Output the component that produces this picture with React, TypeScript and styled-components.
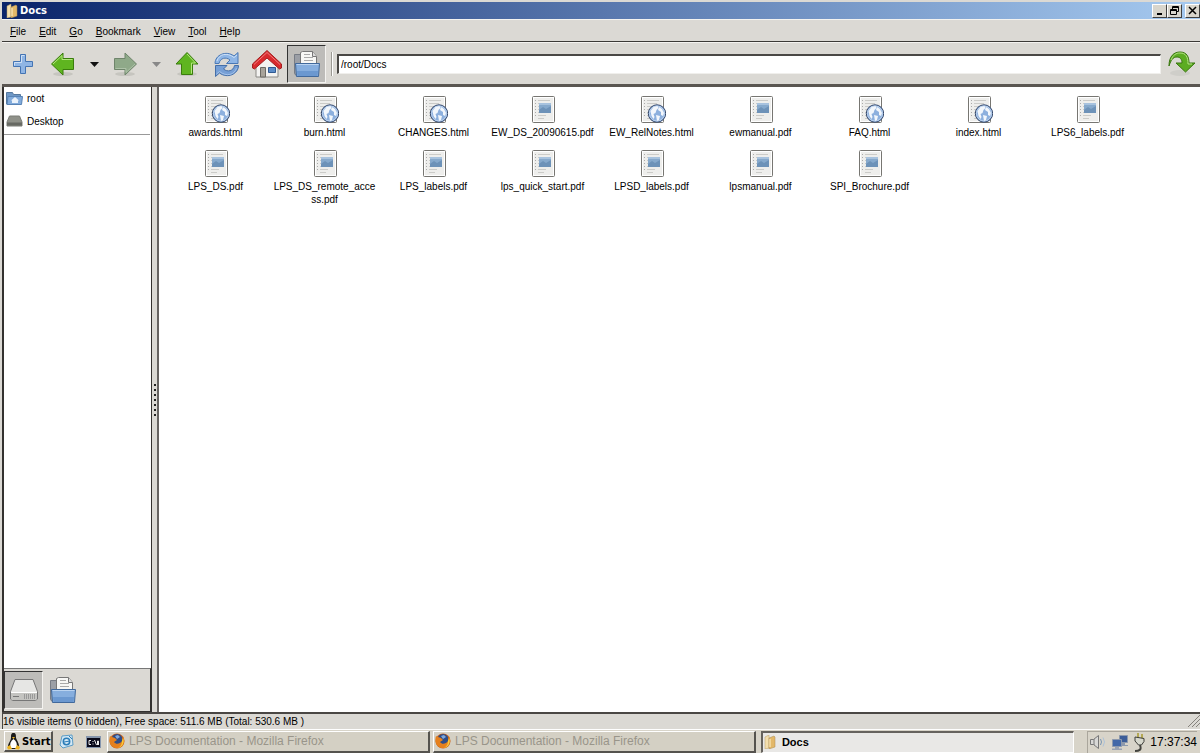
import React from 'react';
import styled, { createGlobalStyle, css } from 'styled-components';

const Global = createGlobalStyle`
  * { box-sizing: border-box; }
  html, body, #root { height: 100%; }
  body {
    margin: 0;
    background: #d9d7cf;
    color: #000;
    font: 10px/13px "Liberation Sans", Arial, sans-serif;
    overflow: hidden;
  }
  button, input { font: inherit; color: inherit; margin: 0; }
  svg { display: block; flex: none; }
  h1, ul { margin: 0; padding: 0; list-style: none; }
`;

const Desktop = styled.div`
  height: 100vh;
  display: flex;
  flex-direction: column;
`;

const Window = styled.section`
  flex: 1;
  min-height: 0;
  display: flex;
  flex-direction: column;
  padding: 2px 0 0 2px;
  background: #dbd9d4;
`;

const TitleBar = styled.header`
  flex: none;
  height: 17px;
  display: flex;
  align-items: center;
  gap: 2px;
  padding-left: 4px;
  background: linear-gradient(90deg, #0a246a, #a6caf0);
`;

const Title = styled.h1`
  flex: 1;
  color: #fff;
  font: bold 10px/17px "DejaVu Sans", Verdana, sans-serif;
`;

const WindowButton = styled.button<{ $apart?: boolean }>`
  width: 15px;
  height: 14px;
  padding: 0;
  margin-left: ${p => (p.$apart ? 1 : -2)}px;
  display: grid;
  place-items: center;
  background: #d8d5cc;
  border: 1px solid;
  border-color: #fff #404040 #404040 #fff;
`;

const MenuBar = styled.nav`
  flex: none;
  height: 23px;
  display: flex;
  align-items: center;
  gap: 13px;
  padding: 2px 0 0 8px;
  border-top: 1px solid #f4f3f0;
  border-bottom: 1px solid #3c3a37;
`;

const MenuButton = styled.button`
  padding: 0;
  border: 0;
  background: none;
  u { text-underline-offset: 1px; }
`;

const ToolBar = styled.div`
  flex: none;
  height: 45px;
  display: flex;
  align-items: center;
  padding: 1px 4px 0 1px;
  border-top: 1px solid #f4f3f0;
  border-bottom: 3px solid #5a5651;
`;

const ToolButton = styled.button<{ $narrow?: boolean }>`
  width: ${p => (p.$narrow ? 22 : 40)}px;
  height: 38px;
  padding: 0;
  display: grid;
  place-items: center;
  border: 0;
  background: none;
`;

const sunken = css`
  background: #bdbcb9;
  border: 1px solid;
  border-color: #333 #f4f3f0 #f4f3f0 #333;
`;

const PanelButton = styled.button<{ $pressed?: boolean }>`
  width: 39px;
  height: 38px;
  padding: 0;
  display: grid;
  place-items: center;
  border: 0;
  background: none;
  ${p => p.$pressed && sunken}
`;

const Separator = styled.span`
  width: 2px;
  height: 24px;
  margin: 0 4px 0 5px;
  border-left: 1px solid #9a9892;
  border-right: 1px solid #fff;
`;

const PathInput = styled.input`
  flex: 1;
  min-width: 0;
  height: 20px;
  padding: 0 2px;
  margin-right: 7px;
  background: #fff;
  border: solid;
  border-width: 2px 1px 1px 2px;
  border-color: #4a4845 #f0efec #f0efec #4a4845;
  outline: 0;
`;

const GoButton = styled.button`
  padding: 0;
  border: 0;
  background: none;
`;

const Body = styled.div`
  flex: 1;
  min-height: 0;
  display: flex;
`;

const Sidebar = styled.aside`
  width: 150px;
  display: flex;
  flex-direction: column;
  border: solid #33312f;
  border-width: 0 1px 1px 2px;
  background: #fff;
`;

const Places = styled.ul`
  flex: 1;
  padding-right: 1px;
`;

const Place = styled.li`
  height: 23px;
  display: flex;
  align-items: center;
  gap: 4px;
  padding-left: 2px;
  &:last-child { height: 25px; padding-bottom: 2px; border-bottom: 1px solid #999; }
`;

const PanelSwitch = styled.div`
  height: 43px;
  display: flex;
  align-items: center;
  background: #dbd9d4;
  border-top: 1px solid #777;
  border-right: 1px solid #33312f;
`;

const Splitter = styled.div`
  width: 7px;
  display: flex;
  flex-direction: column;
  align-items: center;
  justify-content: center;
  gap: 3px;
  background: #dbd9d4;
  border-right: 2px solid #666361;
`;

const Grip = styled.span`
  width: 2px;
  height: 2px;
  background: #222;
`;

const Files = styled.main`
  flex: 1;
  min-width: 0;
  display: grid;
  grid-template-columns: repeat(auto-fill, 109px);
  align-content: start;
  row-gap: 10px;
  padding: 8px 0 0 2px;
  background: #fff;
`;

const FileItem = styled.div`
  display: flex;
  flex-direction: column;
  align-items: center;
  gap: 3px;
`;

const FileName = styled.span`
  width: 104px;
  text-align: center;
  word-break: break-all;
`;

const StatusBar = styled.footer`
  flex: none;
  height: 17px;
  display: flex;
  align-items: center;
  justify-content: space-between;
  padding-bottom: 1px;
  border-top: 2px solid #4a4744;
  border-left: 1px solid #4a4744;
`;

const TaskBar = styled.footer`
  flex: none;
  height: 24px;
  display: flex;
  align-items: center;
  padding: 0 3px 0 4px;
  background: #d8d4c9;
  border-top: 1px solid #fff;
`;

const StartButton = styled.button`
  width: 49px;
  height: 21px;
  padding: 0 0 0 1px;
  display: flex;
  align-items: center;
  gap: 1px;
  font: bold 10px/13px "DejaVu Sans", Verdana, sans-serif;
  background: #d8d4c9;
  border: solid;
  border-width: 1px 2px 2px 1px;
  border-color: #fff #55534e #55534e #fff;
`;

const QuickButton = styled.button`
  width: 27px;
  padding: 0;
  display: grid;
  place-items: center;
  border: 0;
  background: none;
`;

const Task = styled.button<{ $active?: boolean }>`
  flex: ${p => (p.$active ? 97 : 100)} 1 0;
  min-width: 0;
  height: 22px;
  display: flex;
  align-items: center;
  gap: 4px;
  padding: 0 0 0 1px;
  margin-right: 3px;
  font-size: 12px;
  line-height: 16px;
  color: #99958a;
  background: #d4d0c4;
  border: solid;
  border-width: 1px 2px 2px 1px;
  border-color: #fff #55534e #55534e #fff;
  ${p => p.$active && css`
    gap: 6px;
    margin: 0 13px 0 2px;
    font-size: 11px;
    font-weight: bold;
    color: #000;
    background: #e9e8e6;
    border-width: 2px 1px 1px 2px;
    border-color: #66635e #fff #fff #66635e;
  `}
`;

const Tray = styled.div`
  height: 22px;
  display: flex;
  align-items: center;
  gap: 4px;
  padding-left: 1px;
  font-size: 12px;
  line-height: 16px;
  border-left: 1px solid #aaa69c;
  border-top: 1px solid #aaa69c;
`;

const FolderTabs = () => (
  <svg width="12" height="14" viewBox="0 0 12 14">
    <path d="M1 2l4-2v13l-4 1z" fill="#f4dfae" stroke="#b79a63" strokeWidth=".5" />
    <path d="M5 3l5-2 1 1v10l-6 2z" fill="#e3b869" stroke="#a98a50" strokeWidth=".5" />
    <path d="M6 4v8" stroke="#fff3cf" />
  </svg>
);

const Plus = () => (
  <svg width="22" height="22" viewBox="0 0 22 22">
    <path d="M8.500 1.500h5v7h7v5h-7v7h-5v-7h-7v-5h7z" fill="#8fb5e4" stroke="#4474b3" />
    <path d="M9.500 9.500v-7h3M9.500 9.500h-7v3" fill="none" stroke="#cfe0f5" />
  </svg>
);

const Arrow = ({ turn = 0, grey = false }: { turn?: number; grey?: boolean }) => (
  <svg width="26" height="26" viewBox="0 0 26 26">
    <ellipse cx="13" cy="23" rx="10" ry="2" fill="#c6c5bf" />
    <g transform={`rotate(${turn} 13 13)`}>
      <path d="M1.500 13L13 2v5.500h10.500v11H13V24z" fill={grey ? '#8fa989' : '#5fb520'} stroke={grey ? '#6f856b' : '#3a7d0c'} />
      <path d="M3 13l9-8.500v4h10.500" fill="none" stroke={grey ? '#aec2a8' : '#b5e67f'} />
    </g>
  </svg>
);

const Caret = ({ color }: { color: string }) => (
  <svg width="9" height="5" viewBox="0 0 9 5"><path d="M0 0h9L4.500 5z" fill={color} /></svg>
);

const refreshBlade = 'M1 12.500C1 4 12 -1 20 5l4-3.500v11H12.500L16 9C12 5.500 6 7 5 12.500z';

const Refresh = () => (
  <svg width="26" height="27" viewBox="0 0 26 27">
    <path d={refreshBlade} fill="#8fb6e6" stroke="#4a78b5" />
    <path d="M3 10C5 3 13 1 20 6.500l3-2.500" fill="none" stroke="#cfe1f6" />
    <g transform="rotate(180 12.750 13.500)">
      <path d={refreshBlade} fill="#769fd6" stroke="#456fa8" />
      <path d="M3 10C5 3 13 1 20 6.500l3-2.500" fill="none" stroke="#a5c3e9" />
    </g>
  </svg>
);

const House = () => (
  <svg width="30" height="28" viewBox="0 0 30 28">
    <path d="M4 14L15 5l11 9v13H4z" fill="#f4f3f1" stroke="#8b8985" />
    <path d="M8.500 17.500h5V27h-5z" fill="#a8a39a" stroke="#6d6a64" />
    <path d="M16.500 17.500h7v5h-7z" fill="#5b8cc8" stroke="#315a92" />
    <path d="M15 .5L29.500 14v4l-2 1L15 8 2.500 19l-2-1v-4z" fill="#d92a2e" stroke="#a32020" />
    <path d="M2 14.500L15 2.500l13 12" fill="none" stroke="#f27a7a" />
  </svg>
);

const DocsFolder = () => (
  <svg width="28" height="28" viewBox="0 0 28 28">
    <path d="M1.500 4.500h7V25h-6l-1-2z" fill="#9b9fa6" stroke="#777c85" />
    <path d="M7.500 17V2.500l2-1h10l4 5V17z" fill="#f7f7f5" stroke="#777" />
    <path d="M11 4.500h6M11 7.500h9M11 10.500h9" stroke="#aaa" />
    <path d="M19.500 1.500v5h4" fill="#ddd" stroke="#777" />
    <path d="M3.500 26.500l-1-13h24l-1 13z" fill="#86aede" stroke="#41699c" />
    <path d="M3.500 14.500h22" stroke="#bad3f0" />
    <path d="M4 21h21l-.5 5h-20z" fill="#6b98d0" />
  </svg>
);

const GoArrow = () => (
  <svg width="28" height="28" viewBox="0 0 28 28">
    <ellipse cx="12" cy="23" rx="10" ry="3" fill="#cfcec9" />
    <path d="M1 16C1 6 6 2 12 2c7 0 9 5 9 11h6l-9.500 9L8 13h6c0-4-2-6-5-6-4 0-6 3-8 9z" fill="#5cac22" stroke="#39760f" />
    <path d="M3 10c2-5 5-7 9-7 6 0 8 4 8 11h4" fill="none" stroke="#b3e084" />
  </svg>
);

const HomeFolder = () => (
  <svg width="17" height="15" viewBox="0 0 17 15">
    <path d="M.5 1.500h6l1 2h7V13H.5z" fill="#6f98c6" stroke="#56799f" />
    <path d="M1 13.500L2 5.500h14.500l-1 8z" fill="#82abdb" stroke="#5883b5" />
    <path d="M9 6l4 3.500h-1V12H6V9.500H5z" fill="#eaf2fb" />
  </svg>
);

const DesktopDrive = () => (
  <svg width="17" height="12" viewBox="0 0 17 12">
    <path d="M3.500 1h10L16 7v4H1V7z" fill="#8f9189" stroke="#7b7d76" />
    <path d="M1 7.500h15v3H1z" fill="#676963" />
  </svg>
);

const Drive = () => (
  <svg width="30" height="24" viewBox="0 0 30 24">
    <path d="M6 1.500h18l4.500 12V21l-2 1.500h-23l-2-1.500v-7.500z" fill="#e6e6e4" stroke="#777" />
    <path d="M2 14.500h26V21l-1.500 1H3.500L2 21z" fill="#c4c4c1" />
    <path d="M4 18.500h6" stroke="#777" />
    <path d="M15.500 16v5M17.500 16v5M19.500 16v5M21.500 16v5M23.500 16v5M25.500 16v5" stroke="#999" />
    <path d="M2 14.500h26" stroke="#fff" />
  </svg>
);

const Page = ({ html }: { html?: boolean }) => (
  <svg width="28" height="28" viewBox="0 0 28 28">
    <rect x="3.500" y="1.500" width="22" height="26" rx="1" fill="#eeeeec" stroke="#777672" />
    <rect x="4.500" y="2.500" width="20" height="24" fill="none" stroke="#fff" />
    <path d="M6 5.500h1M6 8.500h1M6 11.500h1M6 14.500h1M6 17.500h1M6 20.500h1" stroke="#aaa" />
    <path d="M9 5.500h12M9 8.500h10M9 11.500h12M9 14.500h11M9 17.500h12M9 20.500h8M9 23.500h6" stroke="#cbcbc8" />
    {html ? (
      <g>
        <circle cx="19" cy="18.500" r="8.700" fill="#8db0de" stroke="#37496b" />
        <circle cx="19" cy="18.500" r="7.500" fill="none" stroke="#bdd3ee" />
        <path d="M12.500 16l3-4 4-1 1 2-2 2-1 3-2 1 1 3-1 2-2-3zM21 12l3 2 2 4-1 3-2-1v-3l-3-2zM18 20l4 1-1 4-2 1z" fill="#f3f7fc" />
      </g>
    ) : (
      <g>
        <path d="M10 8h12v10H10z" fill="#86a9cc" />
        <path d="M10 15l4-3 3 2 5-3v7H10z" fill="#6d92b8" />
        <path d="M10 8h12v2H10z" fill="#a7c2de" />
      </g>
    )}
  </svg>
);

const Penguin = () => (
  <svg width="15" height="17" viewBox="0 0 15 17">
    <path d="M7.500 0C10 0 10 2 10 5c1 3 3 5 3 8l-2 3H4l-2-3c0-3 3-5 3-8 0-3 0-5 2.500-5z" fill="#1b1b1b" />
    <path d="M7.500 6c3 2 4 5 3 9h-6c-1-4 0-7 3-9z" fill="#fff" />
    <path d="M6 4h3l-1.500 2z" fill="#eeb422" />
    <path d="M1 14l3-2 2 4-4 .5zM14 14l-3-2-2 4 4 .5z" fill="#eeb422" />
  </svg>
);

const MailPage = () => (
  <svg width="15" height="15" viewBox="0 0 15 15">
    <path d="M3 2l10-1 1 10-10 3-3-3z" fill="#d3e8f5" stroke="#5b9cc6" />
    <circle cx="7.500" cy="7.500" r="3.200" fill="none" stroke="#2b7db8" strokeWidth="1.500" />
    <path d="M5 8l6-1M10 2l3 3" stroke="#2b7db8" />
  </svg>
);

const Terminal = () => (
  <svg width="15" height="12" viewBox="0 0 15 12">
    <rect width="15" height="12" fill="#8696ad" />
    <rect x="1" y="2" width="13" height="9" fill="#08091a" />
    <path d="M5 4.500H3v4h2M7 5v1M7 7.500v1M8.500 4l2 5M11.500 9V5h1v4" fill="none" stroke="#eee" />
  </svg>
);

const Fox = () => (
  <svg width="16" height="16" viewBox="0 0 16 16">
    <circle cx="8" cy="8" r="7.500" fill="#c9601a" />
    <circle cx="8" cy="6.500" r="5.500" fill="#2f4d86" />
    <path d="M6 3l3-1 2 2-3 2z" fill="#80a8dc" />
    <path d="M1 3l2 1 3 1 2 2-3 2c2 3 6 2 8-1l1-5c3 6 0 12-6 12S-1 9 1 3z" fill="#e5801d" />
    <path d="M14 5c2 5-1 9-5 10 3-2 4-4 4-7z" fill="#f8cc3b" />
  </svg>
);

const Speaker = () => (
  <svg width="18" height="16" viewBox="0 0 18 16">
    <path d="M1.500 5.500h3l5-4v13l-5-4h-3z" fill="#d8d8d6" stroke="#777" />
    <path d="M5 5v6" stroke="#777" />
    <path d="M11.500 5q2 3 0 6" fill="none" stroke="#7895b4" />
    <path d="M14 3.500q3 4.500 0 9" fill="none" stroke="#adc2d8" />
  </svg>
);

const Network = () => (
  <svg width="18" height="17" viewBox="0 0 18 17">
    <path d="M8.500 1.500h8v7h-8z" fill="#3c5d98" stroke="#8c99ad" />
    <path d="M11 9h3v2h3v1H9z" fill="#8c99ad" />
    <path d="M1.500 5.500h9v7h-9z" fill="#4268a8" stroke="#8c99ad" />
    <path d="M4 13h4v1.500h3V16H1v-1.500h3z" fill="#99a3b3" />
  </svg>
);

const Plug = () => (
  <svg width="13" height="19" viewBox="0 0 13 19">
    <path d="M5 0v5M9 1v5" stroke="#a8992e" strokeWidth="1.500" />
    <path d="M2 4l9 1.500v3L8.500 12h-3L2 8z" fill="#d7d8cd" stroke="#3c3c38" />
    <path d="M7 12c2 5-1 6-5 6" fill="none" stroke="#44443f" strokeWidth="2" />
  </svg>
);

const ResizeCorner = () => (
  <svg width="12" height="12" viewBox="0 0 12 12">
    <path d="M0 12L12 0M4 12l8-8M8 12l4-4" stroke="#85827c" />
  </svg>
);

const menus = ['File', 'Edit', 'Go', 'Bookmark', 'View', 'Tool', 'Help'];
const files = [
  'awards.html', 'burn.html', 'CHANGES.html', 'EW_DS_20090615.pdf', 'EW_RelNotes.html', 'ewmanual.pdf',
  'FAQ.html', 'index.html', 'LPS6_labels.pdf', 'LPS_DS.pdf', 'LPS_DS_remote_access.pdf', 'LPS_labels.pdf',
  'lps_quick_start.pdf', 'LPSD_labels.pdf', 'lpsmanual.pdf', 'SPI_Brochure.pdf',
];

export default function App() {
  return (
    <Desktop>
      <Global />
      <Window>
        <TitleBar>
          <FolderTabs />
          <Title>Docs</Title>
          <WindowButton aria-label="Minimize">
            <svg width="9" height="9" viewBox="0 0 9 9"><path d="M2 8h5" stroke="#000" strokeWidth="2" /></svg>
          </WindowButton>
          <WindowButton aria-label="Restore">
            <svg width="9" height="9" viewBox="0 0 9 9">
              <path d="M2.500 3V.5h6v5H6.500M2.500 1.500h6M.5 3.500h6v5h-6zM.5 4.500h6" fill="none" stroke="#000" />
            </svg>
          </WindowButton>
          <WindowButton $apart aria-label="Close">
            <svg width="9" height="9" viewBox="0 0 9 9"><path d="M1 1l7 7M8 1L1 8" stroke="#000" strokeWidth="1.500" /></svg>
          </WindowButton>
        </TitleBar>
        <MenuBar>
          {menus.map(m => (
            <MenuButton key={m}><u>{m[0]}</u>{m.slice(1)}</MenuButton>
          ))}
        </MenuBar>
        <ToolBar>
          <ToolButton aria-label="New tab"><Plus /></ToolButton>
          <ToolButton aria-label="Back"><Arrow /></ToolButton>
          <ToolButton $narrow aria-label="Back history"><Caret color="#111" /></ToolButton>
          <ToolButton aria-label="Forward"><Arrow turn={180} grey /></ToolButton>
          <ToolButton $narrow aria-label="Forward history"><Caret color="#888" /></ToolButton>
          <ToolButton aria-label="Up"><Arrow turn={90} /></ToolButton>
          <ToolButton aria-label="Refresh"><Refresh /></ToolButton>
          <ToolButton aria-label="Home"><House /></ToolButton>
          <PanelButton $pressed aria-label="Show places"><DocsFolder /></PanelButton>
          <Separator />
          <PathInput aria-label="Location" defaultValue="/root/Docs" />
          <GoButton aria-label="Go"><GoArrow /></GoButton>
        </ToolBar>
        <Body>
          <Sidebar>
            <Places>
              <Place><HomeFolder />root</Place>
              <Place><DesktopDrive />Desktop</Place>
            </Places>
            <PanelSwitch>
              <PanelButton $pressed aria-label="Drives"><Drive /></PanelButton>
              <PanelButton aria-label="Folders"><DocsFolder /></PanelButton>
            </PanelSwitch>
          </Sidebar>
          <Splitter>
            {Array.from({ length: 7 }, (_, i) => <Grip key={i} />)}
          </Splitter>
          <Files>
            {files.map(f => (
              <FileItem key={f}>
                <Page html={f.endsWith('.html')} />
                <FileName>{f}</FileName>
              </FileItem>
            ))}
          </Files>
        </Body>
        <StatusBar>
          16 visible items (0 hidden), Free space: 511.6 MB (Total: 530.6 MB )
          <ResizeCorner />
        </StatusBar>
      </Window>
      <TaskBar>
        <StartButton><Penguin />Start</StartButton>
        <QuickButton aria-label="Browser"><MailPage /></QuickButton>
        <QuickButton aria-label="Terminal"><Terminal /></QuickButton>
        <Task><Fox />LPS Documentation - Mozilla Firefox</Task>
        <Task><Fox />LPS Documentation - Mozilla Firefox</Task>
        <Task $active><FolderTabs />Docs</Task>
        <Tray>
          <Speaker />
          <Network />
          <Plug />
          <time>17:37:34</time>
        </Tray>
      </TaskBar>
    </Desktop>
  );
}
